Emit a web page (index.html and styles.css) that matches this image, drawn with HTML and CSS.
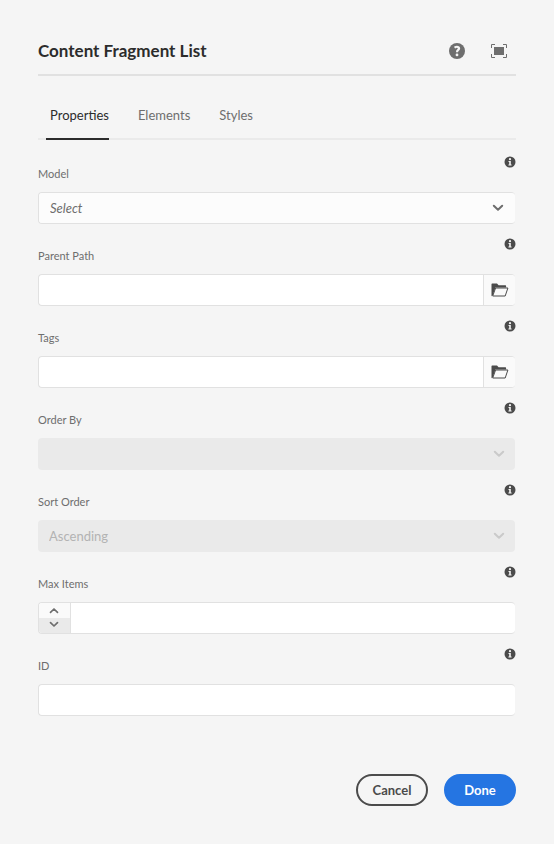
FILE: index.html
```html
<!DOCTYPE html>
<html lang="en">
<head>
<meta charset="utf-8">
<meta name="viewport" content="width=device-width, initial-scale=1">
<title>Content Fragment List</title>
<link rel="stylesheet" href="styles.css">
</head>
<body>
<svg class="sprite" aria-hidden="true">
  <symbol id="info" viewBox="0 0 12 12">
    <circle cx="6" cy="6" r="5.5" fill="#4b4b4b"/>
    <circle cx="6" cy="3.2" r="1.1" fill="#f5f5f5"/>
    <path d="M4.5 5h2.3v3.4h.8v1H4.4v-1h.8V6h-.7z" fill="#f5f5f5"/>
  </symbol>
  <symbol id="chevron" viewBox="0 0 12 8">
    <path d="M1.8 1.7 6 5.8l4.200-4.100" fill="none" stroke="currentColor" stroke-width="2" stroke-linecap="round" stroke-linejoin="round"/>
  </symbol>
  <symbol id="folder" viewBox="0 0 18 14">
    <path d="M.5 13.300V1.200Q.5.500 1.200.500H6l1.600 1.700h6.800q.7 0 .7.700V4.400H4.500L1.700 12.500z" fill="#4b4b4b"/>
    <path d="M4.600 5h12.300l-2.700 8H1.700z" fill="#fafafa" stroke="#4b4b4b" stroke-linejoin="round"/>
  </symbol>
</svg>
<form class="dialog">
  <header class="header">
    <h1 class="title">Content Fragment List</h1>
    <button type="button" class="icon-button" aria-label="Help">
      <svg width="16" height="16" viewBox="0 0 16 16"><circle cx="8" cy="8" r="8" fill="#6e6e6e"/><path d="M5.500 4.600Q8 3.100 9.500 4.300q1.100 1.200-.1 2.400Q8 7.900 8 9.300" fill="none" stroke="#f5f5f5" stroke-width="2.200"/><circle cx="8" cy="11.900" r="1.400" fill="#f5f5f5"/></svg>
    </button>
    <button type="button" class="icon-button" aria-label="Toggle fullscreen">
      <svg width="16" height="14" viewBox="0 0 16 14"><path d="M3 3h10v8H3z" fill="#6e6e6e"/><path d="M.5 4V.5H4M12 .5h3.500V4M15.500 10v3.500H12M4 13.500H.5V10" fill="none" stroke="#6e6e6e"/></svg>
    </button>
  </header>
  <nav class="tabs">
    <a class="tab selected" href="#properties">Properties</a>
    <a class="tab" href="#elements">Elements</a>
    <a class="tab" href="#styles">Styles</a>
  </nav>
  <main class="fields" id="properties">
    <div class="field">
      <div class="caption"><label for="model">Model</label><svg class="info"><use href="#info"/></svg></div>
      <div class="control">
        <select id="model" class="placeholder"><option>Select</option></select>
        <svg class="chevron"><use href="#chevron"/></svg>
      </div>
    </div>
    <div class="field">
      <div class="caption"><label for="path">Parent Path</label><svg class="info"><use href="#info"/></svg></div>
      <div class="control">
        <input id="path" type="text">
        <button type="button" class="browse" aria-label="Browse paths"><svg width="18" height="14"><use href="#folder"/></svg></button>
      </div>
    </div>
    <div class="field">
      <div class="caption"><label for="tags">Tags</label><svg class="info"><use href="#info"/></svg></div>
      <div class="control">
        <input id="tags" type="text">
        <button type="button" class="browse" aria-label="Browse tags"><svg width="18" height="14"><use href="#folder"/></svg></button>
      </div>
    </div>
    <div class="field">
      <div class="caption"><label for="order">Order By</label><svg class="info"><use href="#info"/></svg></div>
      <div class="control disabled">
        <select id="order" disabled><option></option></select>
        <svg class="chevron"><use href="#chevron"/></svg>
      </div>
    </div>
    <div class="field">
      <div class="caption"><label for="sort">Sort Order</label><svg class="info"><use href="#info"/></svg></div>
      <div class="control disabled">
        <select id="sort" disabled><option>Ascending</option></select>
        <svg class="chevron"><use href="#chevron"/></svg>
      </div>
    </div>
    <div class="field">
      <div class="caption"><label for="max">Max Items</label><svg class="info"><use href="#info"/></svg></div>
      <div class="control">
        <div class="stepper">
          <button type="button" class="step up" aria-label="Increase"><svg width="10" height="7"><use href="#chevron"/></svg></button>
          <button type="button" class="step down" aria-label="Decrease"><svg width="10" height="7"><use href="#chevron"/></svg></button>
        </div>
        <input id="max" type="text" inputmode="numeric">
      </div>
    </div>
    <div class="field">
      <div class="caption"><label for="id">ID</label><svg class="info"><use href="#info"/></svg></div>
      <div class="control"><input id="id" type="text"></div>
    </div>
  </main>
  <footer class="footer">
    <button type="button" class="button">Cancel</button>
    <button type="submit" class="button primary">Done</button>
  </footer>
</form>
</body>
</html>
```
FILE: styles.css
```css
* {
  box-sizing: border-box;
}

body {
  margin: 0;
  background: #f5f5f5;
  color: #2c2c2c;
  font: 13px/20px Lato, "Noto Sans", sans-serif;
}

button,
input,
select {
  margin: 0;
  padding: 0;
  border: 0;
  background: none;
  color: inherit;
  font: inherit;
}

.sprite {
  position: absolute;
  width: 0;
  height: 0;
}

.dialog {
  padding: 28px 38px 38px;
}

.header {
  display: flex;
  align-items: center;
  gap: 10px;
  height: 48px;
  padding-right: 1px;
  border-bottom: 2px solid #e1e1e1;
}

.title {
  flex: 1;
  margin: 0;
  font-size: 17px;
  line-height: 24px;
}

.icon-button {
  display: grid;
  place-items: center;
  width: 32px;
  height: 32px;
}

.tabs {
  display: flex;
  gap: 25px;
  height: 64px;
  padding: 16px 8px 0;
  border-bottom: 2px solid #eaeaea;
}

.tab {
  height: 48px;
  padding: 0 0 0 4px;
  border-bottom: 2px solid transparent;
  color: #6e6e6e;
  line-height: 46px;
  text-decoration: none;
}

.selected {
  border-color: #2c2c2c;
  color: #2c2c2c;
}

.fields {
  display: grid;
  gap: 8px;
  padding-top: 10px;
}

.caption {
  display: flex;
  justify-content: space-between;
  height: 42px;
  padding-top: 6px;
  color: #6e6e6e;
  font-size: 11px;
}

.caption label {
  padding-top: 8px;
}

.info {
  width: 12px;
  height: 12px;
}

.control {
  position: relative;
  display: flex;
  height: 32px;
  margin-right: 1px;
  overflow: hidden;
  border: 1px solid #e1e1e1;
  border-right: 0;
  border-radius: 4px;
  background: #fff;
}

.control select,
.control input {
  flex: 1;
  min-width: 0;
  padding: 0 11px;
}

.control select {
  appearance: none;
  background: #fcfcfc;
}

.control .placeholder {
  color: #6e6e6e;
  font-style: italic;
}

.chevron {
  position: absolute;
  top: 11px;
  right: 11px;
  width: 12px;
  height: 8px;
  color: #6e6e6e;
  pointer-events: none;
}

.disabled {
  border: 0;
}

.disabled select {
  background: #eaeaea;
  color: #b3b3b3;
  opacity: 1;
}

.disabled .chevron {
  top: 12px;
  right: 10px;
  color: #cacaca;
}

.browse {
  display: grid;
  place-items: center;
  width: 32px;
  border-left: 1px solid #e1e1e1;
  background: #fafafa;
}

.stepper {
  display: grid;
  grid-template-rows: 1fr 1fr;
  width: 32px;
  border-right: 1px solid #e1e1e1;
  color: #6e6e6e;
}

.step {
  display: grid;
  place-items: center;
  padding-right: 1px;
  background: #fafafa;
}

.up svg {
  transform: rotate(180deg);
}

.down {
  padding-bottom: 3px;
  background: #eaeaea;
}

.footer {
  display: flex;
  justify-content: flex-end;
  gap: 16px;
  padding-top: 58px;
}

.button {
  min-width: 72px;
  height: 32px;
  border: 2px solid #4b4b4b;
  border-radius: 16px;
  color: #4b4b4b;
  font-weight: 700;
}

.primary {
  border-color: #2575e2;
  background: #2575e2;
  color: #fff;
}
```
